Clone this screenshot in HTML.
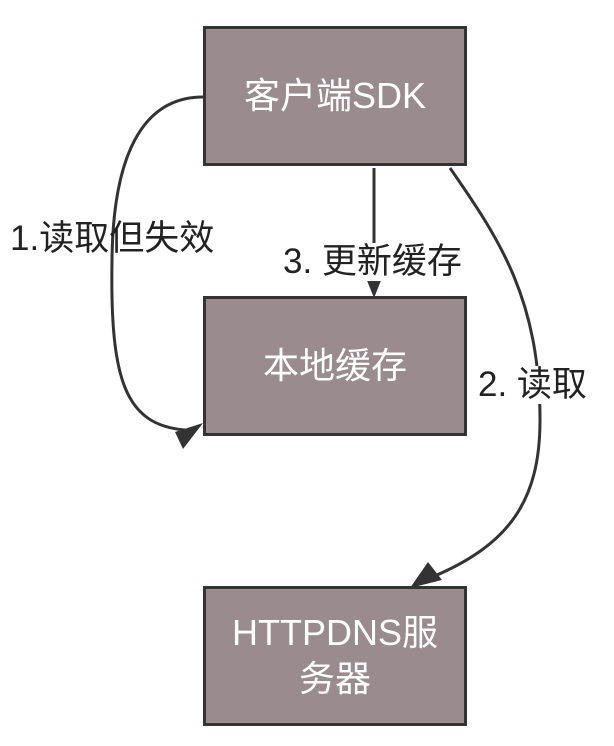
<!DOCTYPE html>
<html><head><meta charset="utf-8"><style>
body{margin:0;background:#fff;width:614px;height:746px;overflow:hidden;position:relative;font-family:"Liberation Sans","Noto Sans CJK SC",sans-serif}
.b{position:absolute;left:203px;width:258px;background:#9a8b8f;border:3px solid #333;color:#fff;font-size:36px;display:flex;align-items:center;justify-content:center;text-align:center;line-height:46px}
.l{position:absolute;font-size:35px;color:#222;white-space:nowrap;background:#fff;line-height:38px}
</style></head><body>
<svg width="614" height="746" style="position:absolute;left:0;top:0">
<g fill="none" stroke="#333" stroke-width="3">
<path d="M203,97 C140,97 113,160 112,260 C110,380 125,425 185,430"/>
<path d="M374,168 L374,282"/>
<path d="M450,168 C500,240 540,300 540,420 C540,500 510,545 430,578"/>
</g>
<g fill="#333">
<polygon points="175,432 203,423 183,449"/>
<polygon points="366,278 382,278 374,298"/>
<polygon points="410,588 428,562 442,580"/>
</g>
</svg>
<div class="b" style="top:26px;height:134px">客户端SDK</div>
<div class="b" style="top:296px;height:134px">本地缓存</div>
<div class="b" style="top:586px;height:134px">HTTPDNS服<br>务器</div>
<div class="l" style="left:10px;top:220px;background:none">1.读取但失效</div>
<div class="l" style="left:281px;top:243px;padding:0 2px">3. 更新缓存</div>
<div class="l" style="left:476px;top:366px;padding:0 2px">2. 读取</div>
</body></html>
